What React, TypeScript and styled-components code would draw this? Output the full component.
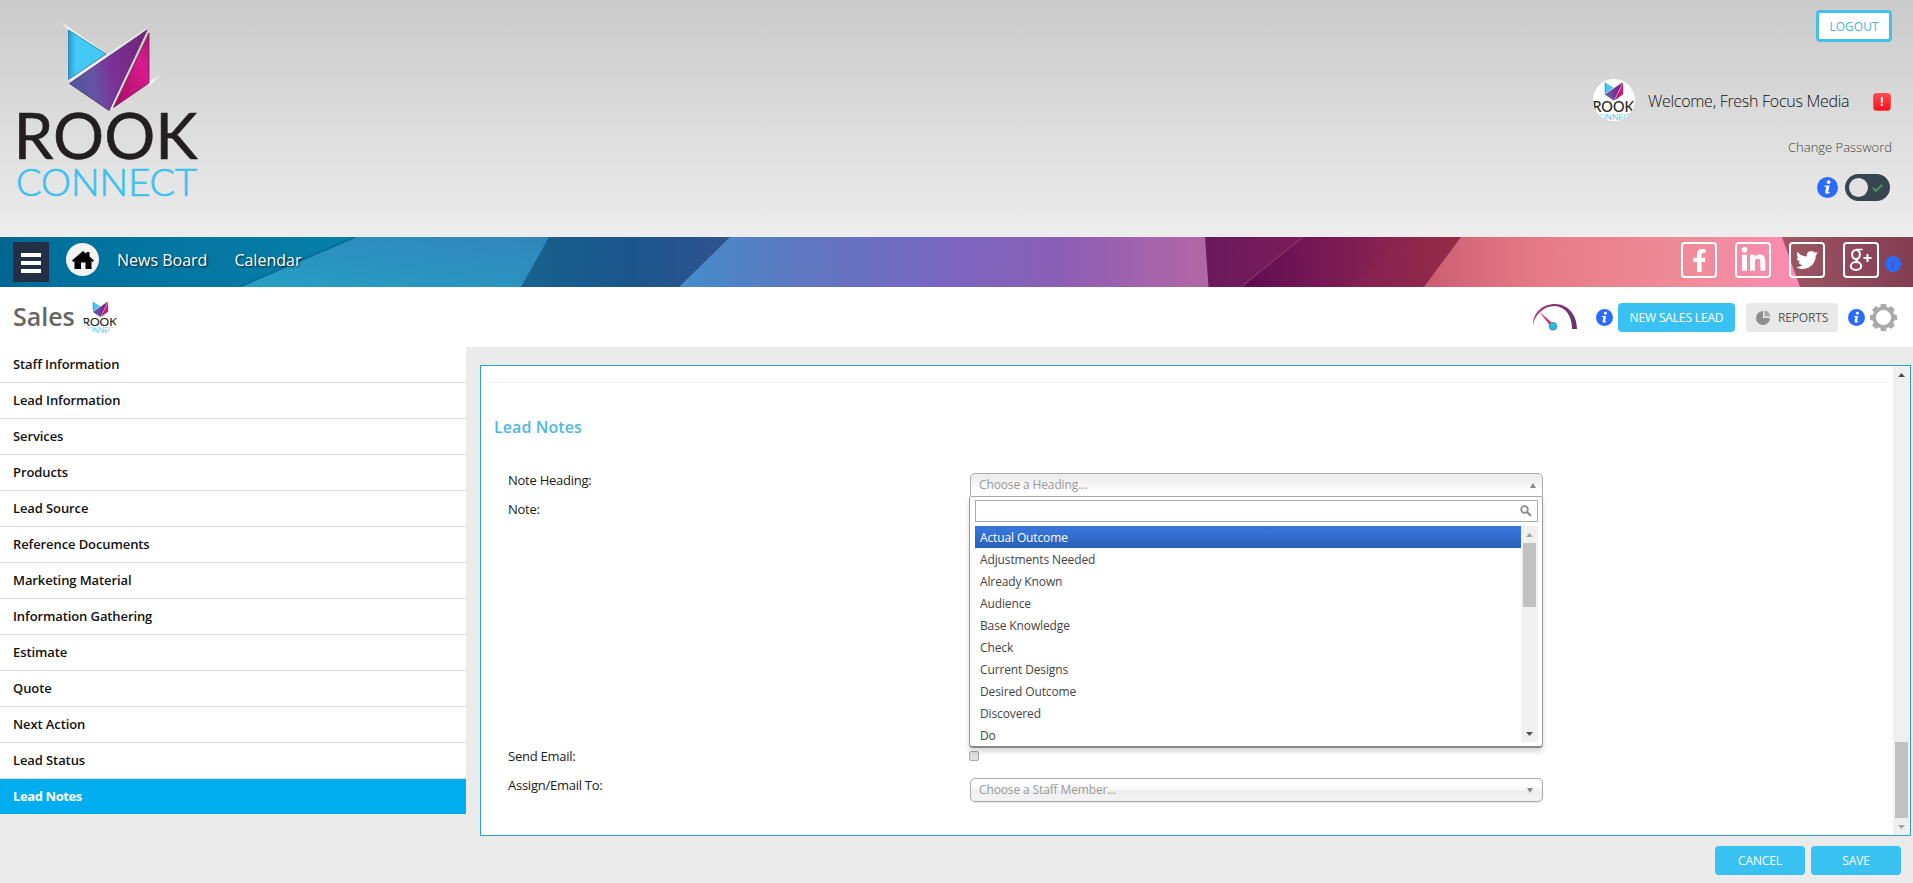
import React from 'react';
import styled, { createGlobalStyle } from 'styled-components';
import { FaFacebookF, FaLinkedinIn, FaTwitter } from 'react-icons/fa';

const GlobalStyle = createGlobalStyle`
  * { box-sizing: border-box; }
  html, body { margin: 0; padding: 0; }
  body {
    background: #ebebeb;
    font-family: 'Open Sans', 'Noto Sans', sans-serif;
    font-size: 13px;
    color: #111;
    overflow: hidden;
  }
  button { font-family: inherit; cursor: pointer; }
  svg { display: block; }
`;

const Page = styled.div`
  display: flex;
  flex-direction: column;
  height: 883px;
`;

const Header = styled.header`
  height: 237px;
  flex: none;
  display: flex;
  justify-content: space-between;
  padding: 10px 21px 0 16px;
  background: linear-gradient(#cacaca, #ededed);
`;

const Brand = styled.div`
  padding-top: 8px;
`;

const Account = styled.div`
  display: flex;
  flex-direction: column;
  align-items: flex-end;
`;

const LogoutButton = styled.button`
  width: 76px;
  height: 32px;
  padding: 0;
  border: 3px solid #43c0ee;
  border-radius: 4px;
  background: #fff;
  color: #4cb3e0;
  font-size: 12px;
`;

const WelcomeRow = styled.div`
  display: flex;
  align-items: center;
  height: 42px;
  margin-top: 37px;
`;

const Avatar = styled.div<{ $size: number }>`
  width: ${(p) => p.$size}px;
  height: ${(p) => p.$size}px;
  border-radius: 50%;
  background: #fff;
  overflow: hidden;
  display: flex;
  justify-content: center;
`;

const Welcome = styled.span`
  width: 203px;
  margin: 0 22px 0 13px;
  padding-top: 1px;
  font-size: 16px;
  font-weight: 350;
  letter-spacing: -0.28px;
  white-space: nowrap;
  color: #111;
`;

const Alert = styled.span`
  width: 18px;
  height: 18px;
  margin-top: 3px;
  margin-right: 1px;
  border: 1px solid #f0555a;
  border-radius: 3px;
  background: linear-gradient(#ff4a4f, #f5101c);
  color: #fff;
  font: bold 13px/16px 'Liberation Sans', sans-serif;
  text-align: center;
`;

const ChangePassword = styled.a`
  height: 20px;
  margin-top: 17px;
  font-size: 13px;
  line-height: 19px;
  font-weight: 350;
  color: #444;
`;

const ToggleRow = styled.div`
  display: flex;
  align-items: center;
  gap: 7px;
  margin: 16px 2px 0 0;
`;

const Toggle = styled.span`
  width: 45px;
  height: 27px;
  padding: 3px 7px 3px 4px;
  border-radius: 14px;
  background: #36454f;
  display: flex;
  align-items: center;
  justify-content: space-between;
`;

const Knob = styled.span`
  width: 19px;
  height: 19px;
  border-radius: 50%;
  background: #e2e2e2;
`;

const Nav = styled.nav`
  position: relative;
  height: 50px;
  flex: none;
  display: flex;
  align-items: flex-start;
  padding: 5px 12px 0 13px;
`;

const NavArt = styled.svg`
  position: absolute;
  inset: 0;
  z-index: -1;
`;

const Burger = styled.button`
  width: 36px;
  height: 40px;
  padding: 2px 0 0;
  border: 0;
  background: #232f45;
  display: flex;
  flex-direction: column;
  align-items: center;
  justify-content: center;
  gap: 4px;
`;

const BurgerLine = styled.span`
  width: 20px;
  height: 4px;
  background: #fff;
`;

const HomeLink = styled.a`
  width: 33px;
  height: 33px;
  margin: 1px 18px 0 17px;
  border-radius: 50%;
  background: #f4f4f4;
  display: flex;
  align-items: center;
  justify-content: center;
`;

const NavLink = styled.a`
  margin-right: 27px;
  font-size: 16px;
  font-weight: 450;
  line-height: 37px;
  color: #fff;
  white-space: nowrap;
  text-shadow: 1px 1px 2px rgba(0, 0, 0, 0.8);
`;

const Social = styled.div`
  margin-left: auto;
  display: flex;
  gap: 18px;
`;

const SocialLink = styled.a`
  width: 36px;
  height: 36px;
  border: 2px solid #fff;
  border-radius: 4px;
  color: #fff;
  display: flex;
  align-items: center;
  justify-content: center;
`;

const SocialInfo = styled.span`
  margin: 14px 0 0 6px;
`;

const TitleBar = styled.div`
  height: 60px;
  flex: none;
  display: flex;
  align-items: center;
  padding: 0 16px 2px 13px;
  background: #fff;
`;

const Title = styled.h1`
  width: 70px;
  margin: 0;
  font-size: 25px;
  font-weight: 600;
  line-height: 34px;
  color: #666;
`;

const Tools = styled.div`
  margin-left: auto;
  display: flex;
  align-items: center;
  padding-top: 3px;
`;

const Button = styled.button<{ $width: number; $muted?: boolean }>`
  width: ${(p) => p.$width}px;
  height: 29px;
  padding: 0;
  border: 0;
  border-radius: 4px;
  background: ${(p) => (p.$muted ? '#e9e9e9' : '#39c2f1')};
  color: ${(p) => (p.$muted ? '#555' : '#fff')};
  font-size: 12px;
  letter-spacing: -0.15px;
  display: flex;
  align-items: center;
  justify-content: center;
  gap: 7px;
  white-space: nowrap;
`;

const Spacer = styled.span<{ $w: number }>`
  width: ${(p) => p.$w}px;
`;

const Body = styled.div`
  flex: 1;
  display: flex;
  align-items: flex-start;
`;

const Sidebar = styled.ul`
  width: 466px;
  margin: 0;
  padding: 0;
  list-style: none;
`;

const SidebarItem = styled.li<{ $active?: boolean }>`
  height: 36px;
  padding-left: 13px;
  line-height: 35px;
  font-size: 13px;
  font-weight: ${(p) => (p.$active ? 700 : 550)};
  letter-spacing: ${(p) => (p.$active ? '-0.4px' : '-0.1px')};
  color: ${(p) => (p.$active ? '#fff' : '#111')};
  background: ${(p) => (p.$active ? '#00aef0' : '#fff')};
  border-bottom: 1px solid ${(p) => (p.$active ? '#ebebeb' : '#dcdcdc')};
`;

const Main = styled.main`
  width: 1431px;
  margin-left: 14px;
  padding-top: 18px;
`;

const Panel = styled.section`
  height: 471px;
  display: flex;
  background: #fff;
  border: 1px solid #2aa3cc;
`;

const PanelContent = styled.div`
  flex: 1;
  padding: 16px 5px 0 4px;
`;

const Divider = styled.hr`
  height: 1px;
  margin: 0;
  border: 0;
  background: #eee;
`;

const SectionTitle = styled.h2`
  margin: 33px 0 33px 9px;
  font-size: 16px;
  line-height: 22px;
  font-weight: 600;
  letter-spacing: 0.1px;
  color: #50b8e4;
`;

const FormRow = styled.div<{ $height: number }>`
  display: grid;
  grid-template-columns: 462px 573px;
  height: ${(p) => p.$height}px;
  padding-left: 23px;
`;

const Label = styled.label`
  line-height: 18px;
  font-size: 13px;
  letter-spacing: -0.25px;
  color: #1a1a1a;
`;

const SelectWrap = styled.div`
  position: relative;
  height: 24px;
  margin-top: 2px;
`;

const SelectBox = styled.div<{ $open?: boolean }>`
  height: 24px;
  padding: 0 ${(p) => (p.$open ? 6 : 9)}px 0 8px;
  border: 1px solid #aaa;
  border-radius: ${(p) => (p.$open ? '5px 5px 0 0' : '5px')};
  background: ${(p) =>
    p.$open
      ? 'linear-gradient(#eee 20%, #fff 80%)'
      : 'linear-gradient(#fff 20%, #f6f6f6 50%, #eee 52%, #f4f4f4 100%)'};
  box-shadow: ${(p) => (p.$open ? 'none' : '0 1px 1px rgba(0,0,0,0.1)')};
  color: #999;
  font-size: 12px;
  letter-spacing: -0.13px;
  line-height: 22px;
  display: flex;
  align-items: center;
  justify-content: space-between;
`;

const Dropdown = styled.div`
  position: absolute;
  top: 24px;
  left: -1px;
  width: 574px;
  height: 251px;
  padding: 3px 4px 0 5px;
  background: #fff;
  border: 1px solid #999;
  border-top: 0;
  border-bottom-width: 2px;
  border-bottom-color: #888;
  border-radius: 0 0 4px 4px;
  box-shadow: 0 4px 5px rgba(0, 0, 0, 0.15);
`;

const SearchField = styled.div`
  height: 22px;
  padding-right: 5px;
  border: 1px solid #aaa;
  display: flex;
  align-items: center;
  justify-content: flex-end;
`;

const Options = styled.div`
  height: 216px;
  margin-top: 4px;
  display: flex;
`;

const OptionList = styled.ul`
  flex: 1;
  height: 220px;
  margin: 0;
  padding: 0;
  list-style: none;
  overflow: hidden;
`;

const Option = styled.li<{ $selected?: boolean }>`
  height: 22px;
  padding-left: 5px;
  font-size: 12px;
  letter-spacing: -0.13px;
  line-height: 23px;
  color: ${(p) => (p.$selected ? '#fff' : '#444')};
  background: ${(p) => (p.$selected ? 'linear-gradient(#3875d7 20%, #2a62bc 90%)' : 'none')};
`;

const Scrollbar = styled.div`
  width: 17px;
  flex: none;
  background: #f0f0f0;
  display: flex;
  flex-direction: column;
  align-items: center;
`;

const ScrollArrow = styled.span`
  height: 17px;
  display: flex;
  align-items: center;
`;

const Thumb = styled.span<{ $height: number; $bottom?: boolean }>`
  width: 13px;
  height: ${(p) => p.$height}px;
  margin-top: ${(p) => (p.$bottom ? 'auto' : '0')};
  background: #c1c1c1;
`;

const Grow = styled.span`
  flex: 1;
`;

const Checkbox = styled.span`
  width: 10px;
  height: 10px;
  margin: 4px 0 0 -1px;
  border: 1px solid #aaa;
  border-radius: 2px;
  background: #dedede;
`;

const Footer = styled.footer`
  display: flex;
  justify-content: flex-end;
  gap: 6px;
  padding: 10px 10px 0 0;
`;

function RookLogo({ width, height }: { width: number; height: number }) {
  const id = React.useId();
  return (
    <svg width={width} height={height} viewBox="0 0 186 180">
      <defs>
        <linearGradient id={`${id}c`} x1="0" x2="1">
          <stop offset="0" stopColor="#269bd3" />
          <stop offset="0.2" stopColor="#42caf5" />
          <stop offset="1" stopColor="#47c8f2" />
        </linearGradient>
        <linearGradient id={`${id}p`} x1="0" y1="0.5" x2="1" y2="0.3">
          <stop offset="0" stopColor="#4f579f" />
          <stop offset="0.28" stopColor="#6652a4" />
          <stop offset="0.52" stopColor="#7c3197" />
          <stop offset="1" stopColor="#732579" />
        </linearGradient>
        <linearGradient id={`${id}m`} x1="0" x2="1" y1="1" y2="0">
          <stop offset="0" stopColor="#a30c61" />
          <stop offset="0.7" stopColor="#d91b90" />
          <stop offset="1" stopColor="#a31f72" />
        </linearGradient>
        <linearGradient id={`${id}w`} x1="0" x2="1">
          <stop offset="0" stopColor="#fff" />
          <stop offset="1" stopColor="#fff" stopOpacity="0" />
        </linearGradient>
      </defs>
      <path d="M45 4 L90 35 L87 36 L52 12Z" fill="#f5f5f5" />
      <path d="M52 62 L131 10 L96 91Z" fill="#ececec" />
      <path d="M130 65 L148 55 L133 68Z" fill={`url(#${id}w)`} />
      <path d="M52.500 12 L90 36 L52.500 61.500Z" fill={`url(#${id}c)`} stroke="#1d7fae" strokeWidth="0.8" />
      <path d="M53.500 65.500 L131 12 L93 92.500Z" fill={`url(#${id}p)`} stroke="#502365" strokeWidth="0.8" />
      <path d="M133 15 L133 65 L97.500 89.500Z" fill={`url(#${id}m)`} stroke="#7b1455" strokeWidth="0.8" />
      <text
        x="-2.500"
        y="141"
        fontFamily="Lato, sans-serif"
        fontSize="64"
        fontWeight="400"
        stroke="#231f20"
        strokeWidth="0.6"
        fill="#231f20"
        textLength="184"
        lengthAdjust="spacingAndGlyphs"
      >
        ROOK
      </text>
      <text
        x="0"
        y="177.500"
        fontFamily="Lato, sans-serif"
        fontSize="36.500"
        fontWeight="300"
        fill="#3fc1ee"
        stroke="#3fc1ee"
        strokeWidth="0.7"
        textLength="181"
        lengthAdjust="spacingAndGlyphs"
      >
        CONNECT
      </text>
    </svg>
  );
}

function InfoIcon({ size, dim }: { size: number; dim?: boolean }) {
  const ink = dim ? '#3f56c8' : '#fff';
  return (
    <svg width={size} height={size} viewBox="0 0 22 22">
      <circle cx="11" cy="11" r="11" fill="#2b6bfb" />
      <circle cx="12.200" cy="5.400" r="1.900" fill={ink} />
      <path
        d="M8 9 H13.200 L11.700 15.500 Q11.700 16.300 13.600 15.400 L13.200 16.800 Q8.200 19 8.600 15.600 L9.700 10.300 H7.700Z"
        fill={ink}
      />
    </svg>
  );
}

function Arrow({ up, color, w = 8, h = 4 }: { up?: boolean; color: string; w?: number; h?: number }) {
  return (
    <svg width={w} height={h} viewBox="0 0 8 4" preserveAspectRatio="none">
      <path d={up ? 'M0 4 L4 0 L8 4Z' : 'M0 0 L4 4 L8 0Z'} fill={color} />
    </svg>
  );
}

function SearchIcon() {
  return (
    <svg width="12" height="12" viewBox="0 0 12 12" fill="none" stroke="#8c8c8c">
      <circle cx="4.500" cy="4.500" r="3.300" strokeWidth="1.800" />
      <path d="M7 7 L11 11" strokeWidth="2.200" />
    </svg>
  );
}

function GooglePlus() {
  return (
    <svg width="24" height="24" viewBox="0 0 24 24" fill="none" stroke="#fff" strokeWidth="2">
      <ellipse cx="7" cy="6.500" rx="3.900" ry="4.600" />
      <path d="M7 1.500 H13.500" strokeWidth="1.500" />
      <path d="M9 11 Q6 12.500 9 14.200" strokeWidth="2.200" />
      <ellipse cx="7" cy="18" rx="5.200" ry="4" />
      <path d="M18.500 6 V14 M14.500 10 H22.500" />
    </svg>
  );
}

function NavBackground() {
  return (
    <NavArt width="1913" height="50" viewBox="0 0 1913 50" preserveAspectRatio="none">
      <defs>
        <linearGradient id="n1" x1="0" x2="1">
          <stop offset="0" stopColor="#00668f" />
          <stop offset="0.12" stopColor="#006f9c" />
          <stop offset="1" stopColor="#0880a9" />
        </linearGradient>
        <linearGradient id="n2" x1="0" y1="1" x2="1" y2="0">
          <stop offset="0" stopColor="#259fc5" />
          <stop offset="1" stopColor="#3284bb" />
        </linearGradient>
        <linearGradient id="n3" x1="0" x2="1">
          <stop offset="0" stopColor="#17628e" />
          <stop offset="0.5" stopColor="#1b558c" />
          <stop offset="1" stopColor="#335391" />
        </linearGradient>
        <linearGradient id="n4" x1="0" x2="1">
          <stop offset="0" stopColor="#448ecc" />
          <stop offset="0.2" stopColor="#5b79c0" />
          <stop offset="0.5" stopColor="#7966c1" />
          <stop offset="0.72" stopColor="#8b5eb5" />
          <stop offset="1" stopColor="#b567a5" />
        </linearGradient>
        <linearGradient id="n5" x1="0" x2="1">
          <stop offset="0" stopColor="#691a5c" />
          <stop offset="0.35" stopColor="#7b1b58" />
          <stop offset="1" stopColor="#972c46" />
        </linearGradient>
        <linearGradient id="n6" x1="0" x2="1">
          <stop offset="0" stopColor="#cb5d72" />
          <stop offset="0.3" stopColor="#e67b87" />
          <stop offset="0.7" stopColor="#f08c9a" />
          <stop offset="1" stopColor="#fa8cb6" />
        </linearGradient>
        <linearGradient id="n7" x1="0" x2="1">
          <stop offset="0" stopColor="#9e5764" />
          <stop offset="1" stopColor="#823d52" />
        </linearGradient>
        <linearGradient id="n8" x1="0" x2="1">
          <stop offset="0" stopColor="#5f0c50" />
          <stop offset="1" stopColor="#7c1a56" stopOpacity="0" />
        </linearGradient>
      </defs>
      <path d="M0 0H360V50H0Z" fill="url(#n1)" />
      <path d="M355 0H560V50H239Z" fill="url(#n2)" />
      <path d="M355 0L239 50" stroke="#056f98" strokeWidth="2" />
      <path d="M549 0H740V50H521Z" fill="url(#n3)" />
      <path d="M730 0H1210V50H679Z" fill="url(#n4)" />
      <path d="M1205 0H1470V50H1208.500Z" fill="url(#n5)" />
      <path d="M1303 0H1400L1350 50H1241Z" fill="url(#n8)" />
      <path d="M1303 0L1241 50" stroke="#96407b" strokeWidth="1" />
      <path d="M1461 0H1810V50H1424Z" fill="url(#n6)" />
      <path d="M1782 0H1913V50H1800Z" fill="url(#n7)" />
    </NavArt>
  );
}

function Gauge() {
  return (
    <svg width="45" height="27" viewBox="0 0 45 27">
      <defs>
        <linearGradient id="g1" x1="0" x2="1">
          <stop offset="0" stopColor="#a83a78" />
          <stop offset="1" stopColor="#633470" />
        </linearGradient>
      </defs>
      <path
        d="M0 21 C0 9 9 0 22 0 C35 0 44 11 44 25 L39 25 C39 12 33 3 22 2 C10 2 2 11 0 21Z"
        fill="url(#g1)"
      />
      <path d="M6 7.500 L22 21.500 L18.500 23.500Z" fill="#d6336c" />
      <circle cx="20" cy="22.300" r="4" fill="#36b5dc" stroke="#3a87ad" strokeWidth="0.6" />
    </svg>
  );
}

function Gear() {
  return (
    <svg width="27" height="27" viewBox="-13.500 -13.500 27 27">
      {[0, 45, 90, 135, 180, 225, 270, 315].map((a) => (
        <path key={a} d="M-2.600 -13.500H2.600L3.600 -8H-3.600Z" fill="#aaa" transform={`rotate(${a})`} />
      ))}
      <circle r="9.300" fill="none" stroke="#aaa" strokeWidth="3.400" />
    </svg>
  );
}

function Pie() {
  return (
    <svg width="15" height="15" viewBox="0 0 15 15">
      <path d="M7 1 V8 H14 A7 7 0 1 1 7 1Z" fill="#8f8f8f" />
      <path d="M8.500 0.500 A6.500 6.500 0 0 1 14.500 6.500 H8.500Z" fill="#aaa" />
    </svg>
  );
}

const sections = [
  'Staff Information', 'Lead Information', 'Services', 'Products', 'Lead Source',
  'Reference Documents', 'Marketing Material', 'Information Gathering', 'Estimate',
  'Quote', 'Next Action', 'Lead Status', 'Lead Notes',
];

const headings = [
  'Actual Outcome', 'Adjustments Needed', 'Already Known', 'Audience', 'Base Knowledge',
  'Check', 'Current Designs', 'Desired Outcome', 'Discovered', 'Do',
];

export default function App() {
  return (
    <Page>
      <GlobalStyle />
      <Header>
        <Brand>
          <RookLogo width={186} height={180} />
        </Brand>
        <Account>
          <LogoutButton>LOGOUT</LogoutButton>
          <WelcomeRow>
            <Avatar $size={42}>
              <RookLogo width={43} height={42} />
            </Avatar>
            <Welcome>Welcome, Fresh Focus Media</Welcome>
            <Alert>!</Alert>
          </WelcomeRow>
          <ChangePassword>Change Password</ChangePassword>
          <ToggleRow>
            <InfoIcon size={21} />
            <Toggle>
              <Knob />
              <svg width="11" height="8" viewBox="0 0 11 8">
                <path d="M0.700 3.500 L4 7 L10.300 0.700" fill="none" stroke="#4d9a62" strokeWidth="1.800" />
              </svg>
            </Toggle>
          </ToggleRow>
        </Account>
      </Header>

      <Nav>
        <NavBackground />
        <Burger>
          <BurgerLine />
          <BurgerLine />
          <BurgerLine />
        </Burger>
        <HomeLink>
          <svg width="22" height="18" viewBox="0 0 22 18">
            <path d="M11 0 L14.500 3 V1 H17.500 V5.500 L22 9.500 L20.500 11 L19.500 10.200 V18 H13.500 V11.500 H9 V18 H2.500 V10.200 L1.500 11 L0 9.500Z" fill="#000" />
          </svg>
        </HomeLink>
        <NavLink>News Board</NavLink>
        <NavLink>Calendar</NavLink>
        <Social>
          <SocialLink><FaFacebookF size={23} /></SocialLink>
          <SocialLink><FaLinkedinIn size={27} /></SocialLink>
          <SocialLink><FaTwitter size={22} /></SocialLink>
          <SocialLink><GooglePlus /></SocialLink>
        </Social>
        <SocialInfo><InfoIcon size={16} dim /></SocialInfo>
      </Nav>

      <TitleBar>
        <Title>Sales</Title>
        <Avatar $size={35}>
          <RookLogo width={36} height={35} />
        </Avatar>
        <Tools>
          <Gauge />
          <Spacer $w={18} />
          <InfoIcon size={17} />
          <Spacer $w={5} />
          <Button $width={117}>NEW SALES LEAD</Button>
          <Spacer $w={11} />
          <Button $width={92} $muted><Pie />REPORTS</Button>
          <Spacer $w={10} />
          <InfoIcon size={17} />
          <Spacer $w={5} />
          <Gear />
        </Tools>
      </TitleBar>

      <Body>
        <Sidebar>
          {sections.map((s) => (
            <SidebarItem key={s} $active={s === 'Lead Notes'}>{s}</SidebarItem>
          ))}
        </Sidebar>
        <Main>
          <Panel>
            <PanelContent>
              <Divider />
              <SectionTitle>Lead Notes</SectionTitle>
              <FormRow $height={29}>
                <Label>Note Heading:</Label>
                <SelectWrap>
                  <SelectBox $open>
                    Choose a Heading...
                    <Arrow up color="#888" w={6} h={5} />
                  </SelectBox>
                  <Dropdown>
                    <SearchField><SearchIcon /></SearchField>
                    <Options>
                      <OptionList>
                        {headings.map((h, i) => (
                          <Option key={h} $selected={i === 0}>{h}</Option>
                        ))}
                      </OptionList>
                      <Scrollbar>
                        <ScrollArrow><Arrow up color="#a3a3a3" w={7} /></ScrollArrow>
                        <Thumb $height={64} />
                        <Grow />
                        <ScrollArrow><Arrow color="#505050" w={7} /></ScrollArrow>
                      </Scrollbar>
                    </Options>
                  </Dropdown>
                </SelectWrap>
              </FormRow>
              <FormRow $height={247}>
                <Label>Note:</Label>
              </FormRow>
              <FormRow $height={29}>
                <Label>Send Email:</Label>
                <Checkbox />
              </FormRow>
              <FormRow $height={29}>
                <Label>Assign/Email To:</Label>
                <SelectWrap>
                  <SelectBox>
                    Choose a Staff Member...
                    <Arrow color="#888" w={6} h={5} />
                  </SelectBox>
                </SelectWrap>
              </FormRow>
            </PanelContent>
            <Scrollbar>
              <ScrollArrow><Arrow up color="#505050" w={7} /></ScrollArrow>
              <Thumb $height={76} $bottom />
              <ScrollArrow><Arrow color="#a3a3a3" w={7} /></ScrollArrow>
            </Scrollbar>
          </Panel>
          <Footer>
            <Button $width={90}>CANCEL</Button>
            <Button $width={90}>SAVE</Button>
          </Footer>
        </Main>
      </Body>
    </Page>
  );
}
